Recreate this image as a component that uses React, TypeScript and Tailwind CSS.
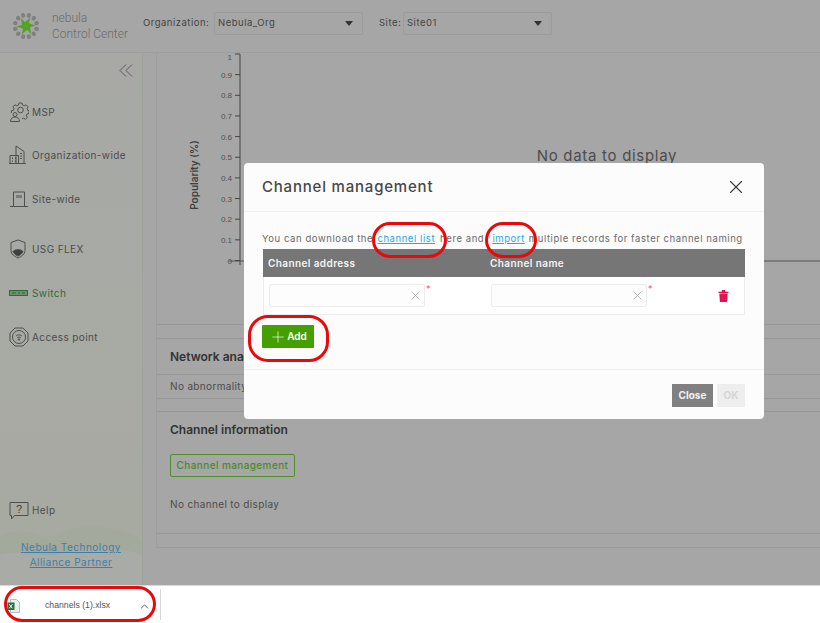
import React from "react";
import { X, Plus, ChevronUp } from "lucide-react";

const font = { fontFamily: "Inter, 'Noto Sans', sans-serif" };

function Logo() {
  const green = [0, 60, 120, 180, 240, 300];
  const grey = [15, 45, 75, 105, 135, 165, 195, 225, 255, 285, 315, 345];
  return (
    <svg width="28" height="28" viewBox="-14 -14 28 28" className="shrink-0">
      {grey.map((a) => (
        <ellipse key={a} cx="0" cy="-11" rx="2.100" ry="2.400" fill="#808080" transform={`rotate(${a})`} />
      ))}
      {green.map((a) => (
        <path key={a} d="M0 0 L-2 -3.500 L3 -9.200 L2.200 -2.600 Z" fill="#55a026" transform={`rotate(${a + 10})`} />
      ))}
    </svg>
  );
}

const s = { fill: "none", stroke: "#4f4f4f", strokeWidth: 1 };

function IconMsp() {
  return (
    <svg width="20" height="20" viewBox="0 0 20 20" {...s}>
      <circle cx="11.500" cy="8" r="2.800" />
      <path d="M10 1h3l.5 2 1.800.8 1.800-1 2 2-1 1.800.7 1.700 1.200.5v2.600l-2 .6-.7 1.600 1 1.800-2 1.800-1.800-1-1.400.6" />
      <path d="M10 1L9.500 3 7.700 3.800 6 2.800 4 4.800l1 1.800L4.400 8.200 2.400 8.800v2" />
      <circle cx="6" cy="12.500" r="2" />
      <path d="M1.500 19.500c0-3 2-4.500 4.500-4.500s4.500 1.500 4.500 4.500z" />
    </svg>
  );
}
function IconOrg() {
  return (
    <svg width="18" height="20" viewBox="0 0 18 20" {...s}>
      <path d="M7 18.500V1l8 5.500v12" />
      <path d="M1 18.500v-8h8.500v8zM0 18.500h17M3.500 12.500v1.500M6.500 12.500v1.500M3.500 15.500v1.500M6.500 15.500v1.500M11 8.500h2M11 11h2M11 13.500h2" />
    </svg>
  );
}
function IconSite() {
  return (
    <svg width="20" height="18" viewBox="0 0 20 18" {...s}>
      <path d="M4.500 16V2h11v14M1 16.500h18M8 5v3M10 5v3M12 5v3" />
    </svg>
  );
}
function IconUsg() {
  return (
    <svg width="18" height="20" viewBox="0 0 18 20" {...s}>
      <path d="M9 1l7 2.500v8c0 3.500-3.500 6-7 7.500-3.500-1.500-7-4-7-7.500v-8z" />
      <path d="M4 12.500c1.500-2.500 8.500-2.500 10 0-1.500 2.500-3 4-5 4.500-2-.5-3.500-2-5-4.500z" fill="#3f3f3f" />
    </svg>
  );
}
function IconSwitch() {
  return (
    <svg width="19" height="6" viewBox="0 0 19 6" fill="none">
      <rect x="0.500" y="0.500" width="18" height="5" stroke="#2f6b3a" fill="#6f8f6c" />
      <path d="M3 3h4M9 3h2M13 3h3" stroke="#2f6b3a" />
    </svg>
  );
}
function IconAp() {
  return (
    <svg width="20" height="20" viewBox="0 0 20 20" {...s}>
      <path d="M6 1h8l5 5v8l-5 5H6l-5-5V6z" />
      <circle cx="10" cy="10" r="6.500" />
      <path d="M7 9c1.700-1.500 4.300-1.500 6 0M8.300 10.700c1-.8 2.400-.8 3.400 0" />
      <circle cx="10" cy="12.500" r=".7" fill="#4f4f4f" />
    </svg>
  );
}
function IconHelp() {
  return (
    <svg width="20" height="19" viewBox="0 0 20 19" {...s}>
      <path d="M1 1.500h18v13H5.500L2.500 18v-3.500H1z" />
      <text x="10" y="12" textAnchor="middle" fontSize="11" fill="#3f3f3f" stroke="none" fontFamily="Liberation Sans">?</text>
    </svg>
  );
}
function Excel() {
  return (
    <svg width="13" height="14" viewBox="0 0 13 14" className="shrink-0">
      <path d="M3.500 .5h6l3 3v10h-9z" fill="#e8efe9" stroke="#9fb3a3" strokeWidth=".8" />
      <rect x="0.500" y="3.500" width="7" height="7.500" fill="#1e7145" />
      <path d="M2.300 5.300l3 4M5.300 5.300l-3 4" stroke="#fff" />
    </svg>
  );
}
function Trash() {
  return (
    <svg width="11" height="12" viewBox="0 0 11 12" fill="#e0174f">
      <path d="M.5 1.800h10v1.200H.5zM3.700 1l.4-1h2.800l.4 1v1h-3.600z" />
      <path d="M1.300 3.400h8.400l-.6 8.600H1.900z" />
    </svg>
  );
}

function NavItem({ icon, label, cls = "text-[#4c4c4c]", mt }: { icon: React.ReactNode; label: string; cls?: string; mt: string }) {
  return (
    <div className={`flex items-center h-5 ${mt}`}>
      <div className="w-[32px] pl-[9px] flex items-center shrink-0">{icon}</div>
      <span className={`text-[10px] font-normal tracking-[0.4px] whitespace-nowrap ${cls}`}>{label}</span>
    </div>
  );
}

function Chart() {
  const ticks = ["1", "0.9", "0.8", "0.7", "0.6", "0.5", "0.4", "0.3", "0.2", "0.1", "0"];
  return (
    <svg width="664" height="270" viewBox="0 0 664 270" className="block">
      <path d="M83 1V212" stroke="#444" strokeWidth="1" fill="none" />
      <path d="M72 208H664" stroke="#555" strokeWidth="1" fill="none" />
      {ticks.map((t, i) => {
        const y = 1 + i * 20.65;
        return (
          <g key={t}>
            <path d={`M78 ${y}H83`} stroke="#444" />
            <text x="75" y={i === 0 ? 6.500 : y + 3} textAnchor="end" fontSize="8" fill="#505050" fontFamily="Liberation Sans">{t}</text>
          </g>
        );
      })}
      <text
        transform="translate(41 122) rotate(-90)"
        textAnchor="middle"
        fontSize="10"
        fontWeight="600"
        fill="#3f3f3f"
        fontFamily="Inter"
      >
        Popularity (%)
      </text>
      <text x="450" y="108" textAnchor="middle" fontSize="15" fill="#4c4c4c" fontFamily="Inter" letterSpacing="0.7">
        No data to display
      </text>
    </svg>
  );
}

function Select({ value, w }: { value: string; w: string }) {
  return (
    <div className={`${w} h-[23px] border border-[#9c9c9c] rounded-[2px] flex items-center justify-between pl-[3px] pr-[9px]`}>
      <span className="text-[9.5px] tracking-[0.5px] text-[#444]">{value}</span>
      <span className="w-0 h-0 border-x-[4px] border-x-transparent border-t-[5px] border-t-[#333]" />
    </div>
  );
}

function Field() {
  return (
    <div className="flex items-start">
      <div className="w-[156px] h-[23px] border border-[#ececec] rounded-[2px] flex items-center justify-end pr-[1px] bg-[#fdfdfd]">
        <X size={15} strokeWidth={1.100} color="#9a9a9a" />
      </div>
      <span className="text-[9px] leading-[9px] text-[#f0556f] ml-[1px]">*</span>
    </div>
  );
}

export default function App() {
  return (
    <div className="relative w-[820px] h-[623px] overflow-hidden flex flex-col bg-white" style={font}>
      <div className="h-[585px] flex flex-col bg-[#a6a6a6] shrink-0">
        {/* top bar */}
        <header className="h-[53px] shrink-0 flex items-center border-b border-[#9e9e9e]">
          <div className="pl-[12px] w-[143px] flex items-center shrink-0">
            <Logo />
            <div className="ml-[12px] text-[12px] leading-[16px] text-[#6b6b6b] whitespace-nowrap" style={{ fontFamily: "Roboto", fontWeight: 300 }}>
              <div>nebula</div>
              <div>Control Center</div>
            </div>
          </div>
          <div className="flex items-center mb-[5px]">
            <span className="text-[9.5px] tracking-[0.5px] text-[#444] w-[71px]">Organization:</span>
            <Select value="Nebula_Org" w="w-[149px]" />
            <span className="text-[9.5px] tracking-[0.5px] text-[#444] ml-[16px] w-[24px]">Site:</span>
            <Select value="Site01" w="w-[149px]" />
          </div>
        </header>

        <div className="flex-1 flex min-h-0">
          {/* sidebar */}
          <aside className="relative w-[143px] shrink-0 border-r border-[#9ea39a] bg-gradient-to-b from-[#a8a9a6] to-[#a7aaa1] overflow-hidden flex flex-col">
            <svg className="absolute left-0 bottom-0" width="142" height="70" viewBox="0 0 142 70">
              <path d="M0 22c20-12 34-2 50 2 22-18 60-16 92 0v46H0z" fill="#a4a99e" />
              <path d="M0 40c20-6 40 2 56 0 30-10 60-10 86 0v30H0z" fill="#a9aba7" />
            </svg>
            <div className="relative flex flex-col flex-1">
              <div className="flex justify-end pr-[9px] pt-[11px] h-[16px]">
                <svg width="14" height="13" viewBox="0 0 14 13" fill="none" stroke="#5c5c5c" strokeWidth="1" className="shrink-0">
                  <path d="M7 .5L1 6.500l6 6M13 .5L7 6.500l6 6" />
                </svg>
              </div>
              <NavItem mt="mt-[33px]" icon={<IconMsp />} label="MSP" />
              <NavItem mt="mt-[23px]" icon={<IconOrg />} label="Organization-wide" />
              <NavItem mt="mt-[24px]" icon={<IconSite />} label="Site-wide" />
              <NavItem mt="mt-[30px]" icon={<IconUsg />} label="USG FLEX" />
              <NavItem mt="mt-[24px]" icon={<IconSwitch />} label="Switch" cls="text-[#2f6b3a]" />
              <NavItem mt="mt-[24px]" icon={<IconAp />} label="Access point" />
              <div className="flex-1" />
              <NavItem mt="" icon={<IconHelp />} label="Help" />
              <div className="mt-[20px] mb-[15px] flex flex-col items-center text-[10px] leading-[15px] tracking-[0.5px] text-[#3f7fa3] underline">
                <span>Nebula Technology</span>
                <span>Alliance Partner</span>
              </div>
            </div>
          </aside>

          {/* content */}
          <main className="flex-1 min-w-0 pl-[13px] overflow-hidden">
            <div className="h-[495px] border-l border-b border-[#9c9e9a] flex flex-col">
              <section className="h-[272px] shrink-0 border-b border-[#989898] overflow-hidden">
                <Chart />
              </section>
              <section className="mt-[13px] h-[61px] shrink-0 border-y border-[#989898] flex flex-col">
                <div className="h-[36px] shrink-0 flex items-center pl-[13px] border-b border-[#989898] text-[12px] font-semibold text-[#333]">
                  Network analytics
                </div>
                <div className="flex-1 flex items-center pl-[13px] text-[10px] tracking-[0.35px] text-[#4c4c4c]">
                  No abnormality detected
                </div>
              </section>
              <section className="mt-[12px] h-[123px] shrink-0 border-y border-[#989898] pl-[13px] pt-[10px]">
                <div className="text-[12px] leading-[16px] font-semibold text-[#333]">Channel information</div>
                <div className="mt-[16px] w-[125px] h-[23px] border border-[#4f8f2a] rounded-[2px] flex items-center justify-center text-[10px] font-medium tracking-[0.4px] text-[#4a8a24]">
                  Channel management
                </div>
                <div className="mt-[20px] text-[10px] tracking-[0.35px] text-[#4c4c4c]">No channel to display</div>
              </section>
            </div>
          </main>
        </div>
      </div>

      {/* download bar */}
      <footer className="flex-1 bg-white flex items-center border-t border-[#d8d8d8]">
        <div className="w-[161px] h-[31px] border-r border-[#d8d8d8] flex items-center pl-[7px] pt-[3px]">
          <Excel />
          <span className="ml-[25px] text-[8.7px] text-[#555] whitespace-nowrap" style={{ fontFamily: "'Liberation Sans', sans-serif" }}>channels (1).xlsx</span>
          <ChevronUp size={13} strokeWidth={1.800} color="#666" className="ml-[28px] shrink-0" />
        </div>
      </footer>

      {/* dialog */}
      <div className="absolute left-[244px] top-[163px] w-[520px] h-[256px] bg-[#fcfcfc] rounded-[4px] flex flex-col">
        <div className="h-[49px] shrink-0 border-b border-[#f0f0f0] flex items-center justify-between pl-[18px] pr-[17px]">
          <span className="text-[15px] font-medium tracking-[0.8px] text-[#474747]">Channel management</span>
          <X size={22} strokeWidth={1.200} color="#3c3c3c" />
        </div>
        <div className="flex-1 flex flex-col px-[19px] pt-[20px]">
          <div className="-ml-px h-[17px] text-[9.5px] tracking-[0.57px] text-[#6a6a6a] whitespace-nowrap">
            You can download the <span className="ml-[1px] text-[#29a9e0] underline">channel list</span>
            <span className="ml-[5px]">here and</span> <span className="ml-[5px] text-[#29a9e0] underline">import</span>
            <span className="ml-[4px]">multiple records for faster channel naming</span>
          </div>
          <div className="h-[28px] shrink-0 bg-[#767676] flex items-center text-[10px] font-semibold tracking-[0.4px] text-[#f5f5f5]">
            <span className="pl-[5px] w-[227px]">Channel address</span>
            <span>Channel name</span>
          </div>
          <div className="h-[38px] shrink-0 border border-t-0 border-[#ececec] bg-white flex items-center pl-[5px]">
            <div className="w-[222px]"><Field /></div>
            <Field />
            <div className="ml-auto mr-[15px] mt-[1px]"><Trash /></div>
          </div>
          <div className="mt-[10px] -ml-px w-[52px] h-[23px] bg-[#43a000] rounded-[1px] flex items-center justify-center text-[10px] font-semibold text-white">
            <Plus size={18} strokeWidth={0.900} color="#fff" />
            <span>Add</span>
          </div>
        </div>
        <div className="h-[50px] shrink-0 border-t border-[#f0f0f0] flex items-start pt-[14px] justify-end pr-[19px] gap-[4px] text-[10px] font-bold">
          <div className="w-[41px] h-[23px] bg-[#808080] text-[#f2f2f2] flex items-center justify-center">Close</div>
          <div className="w-[28px] h-[23px] bg-[#eeeeee] text-[#d6d6d6] flex items-center justify-center">OK</div>
        </div>
      </div>

      {/* red annotations */}
      <div className="absolute left-[372px] top-[222px] w-[75px] h-[36px] border-[3px] border-[#e80a0a] rounded-[18px]" />
      <div className="absolute left-[485px] top-[222px] w-[52px] h-[36px] border-[3px] border-[#e80a0a] rounded-[18px]" />
      <div className="absolute left-[248px] top-[315px] w-[81px] h-[47px] border-[3px] border-[#e80a0a] rounded-[20px]" />
      <div className="absolute left-[4px] top-[586px] w-[152px] h-[36px] border-[3px] border-[#e80a0a] rounded-[18px]" />
    </div>
  );
}
